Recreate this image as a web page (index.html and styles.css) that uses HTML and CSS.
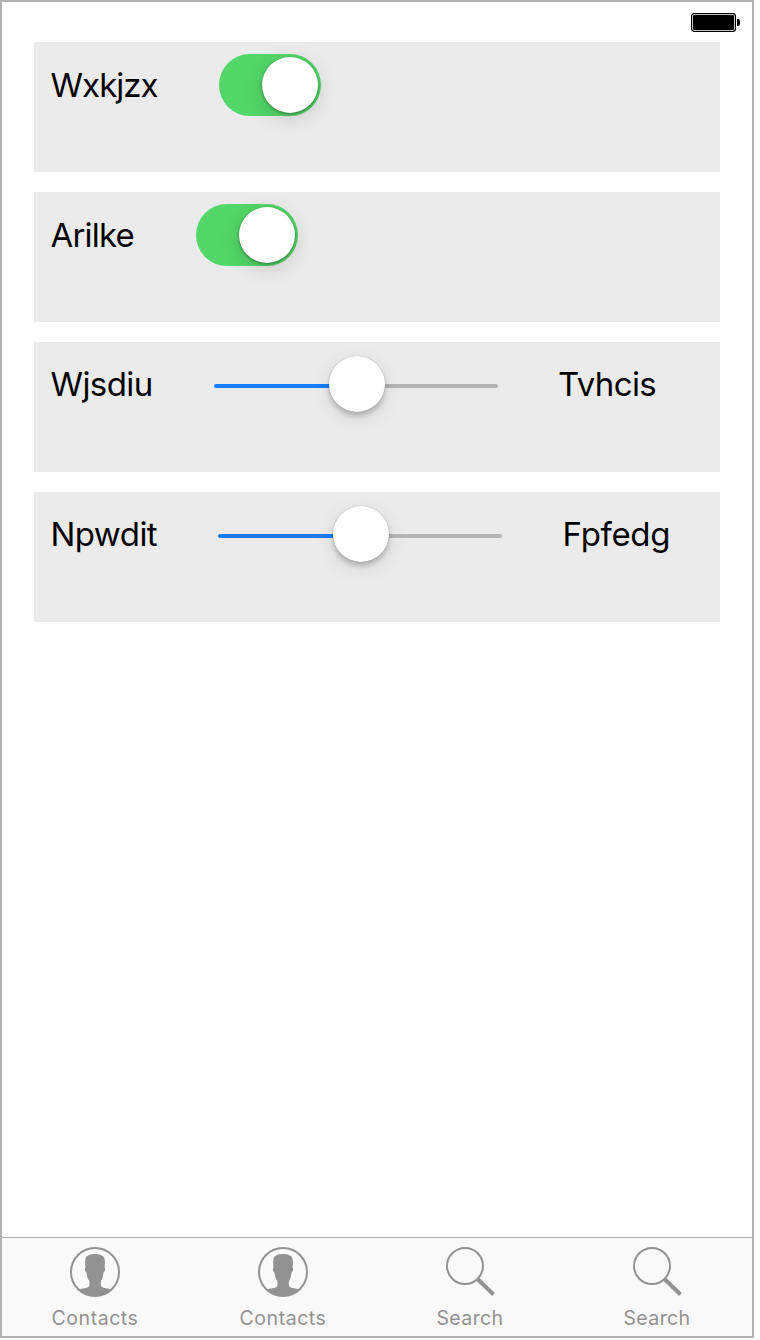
FILE: index.html
```html
<!DOCTYPE html>
<html lang="en">
<head>
<meta charset="utf-8">
<title>Settings</title>
<link rel="stylesheet" href="styles.css">
</head>
<body>
<div class="phone">
  <header class="status">
    <svg class="battery" viewBox="0 0 50 20" width="50" height="20">
      <rect x="0.6" y="0.6" width="43.8" height="17.8" rx="2.6" fill="none" stroke="#000" stroke-width="1.2"/>
      <rect x="2" y="2" width="41" height="15" rx="1" fill="#000"/>
      <path d="M46 6h.8a2.200 2.200 0 0 1 2.200 2.200v2.600a2.200 2.200 0 0 1-2.200 2.200H46z" fill="#000"/>
    </svg>
  </header>
  <main class="rows">
    <section class="row row-toggle row-a">
      <span class="label l1">Wxkjzx</span>
      <span class="toggle"><span class="knob"></span></span>
    </section>
    <section class="row row-toggle row-b">
      <span class="label l2">Arilke</span>
      <span class="toggle"><span class="knob"></span></span>
    </section>
    <section class="row row-slider row-c">
      <span class="label l3">Wjsdiu</span>
      <span class="slider"><span class="fill"></span><span class="thumb"></span><span class="rest"></span></span>
      <span class="label l4">Tvhcis</span>
    </section>
    <section class="row row-slider row-d">
      <span class="label l5">Npwdit</span>
      <span class="slider"><span class="fill"></span><span class="thumb"></span><span class="rest"></span></span>
      <span class="label l6">Fpfedg</span>
    </section>
  </main>
  <nav class="tabs">
    <a class="tab">
      <svg class="icon" viewBox="0 0 50 50" width="50" height="50"><circle cx="25" cy="25" r="24" fill="none" stroke="#929292" stroke-width="2"/><path d="M9 42.300L17 40.800Q19.500 40 19.500 38V34.500C17.700 32 16.800 29 16.500 25.500C15 25 14.500 21.500 15.500 20.800C15.200 17 14.800 13 16 10.500C18 7.500 22 7 25 7C29 7 33 8 34.300 11C35.300 13.500 34.900 17 34.600 20.800C35.500 21.500 35 25 33.500 25.500C33.200 29 32.300 32 30.800 34.500V38Q30.800 40 33.300 40.800L41 42.300C33 51.500 17 51.500 9 42.300z" fill="#929292"/></svg>
      <span class="caption contacts">Contacts</span>
    </a>
    <a class="tab">
      <svg class="icon" viewBox="0 0 50 50" width="50" height="50"><circle cx="25" cy="25" r="24" fill="none" stroke="#929292" stroke-width="2"/><path d="M9 42.300L17 40.800Q19.500 40 19.500 38V34.500C17.700 32 16.800 29 16.500 25.500C15 25 14.500 21.500 15.500 20.800C15.200 17 14.800 13 16 10.500C18 7.500 22 7 25 7C29 7 33 8 34.300 11C35.300 13.500 34.900 17 34.600 20.800C35.500 21.500 35 25 33.500 25.500C33.200 29 32.300 32 30.800 34.500V38Q30.800 40 33.300 40.800L41 42.300C33 51.500 17 51.500 9 42.300z" fill="#929292"/></svg>
      <span class="caption contacts">Contacts</span>
    </a>
    <a class="tab">
      <svg class="icon" viewBox="0 0 50 50" width="50" height="50"><circle cx="20" cy="19" r="18" fill="none" stroke="#929292" stroke-width="2"/><path d="M32.500 32L48.500 47.500" fill="none" stroke="#929292" stroke-width="4"/></svg>
      <span class="caption search">Search</span>
    </a>
    <a class="tab">
      <svg class="icon" viewBox="0 0 50 50" width="50" height="50"><circle cx="20" cy="19" r="18" fill="none" stroke="#929292" stroke-width="2"/><path d="M32.500 32L48.500 47.500" fill="none" stroke="#929292" stroke-width="4"/></svg>
      <span class="caption search">Search</span>
    </a>
  </nav>
</div>
</body>
</html>
```
FILE: styles.css
```css
* { box-sizing: border-box; }
body {
  margin: 0;
  background: #fff;
  font-family: Inter, "Liberation Sans", sans-serif;
}
.phone {
  display: flex;
  flex-direction: column;
  width: 754px;
  height: 1338px;
  border: 2px solid #b2b2b2;
  background: #fff;
}
.status {
  display: flex;
  justify-content: flex-end;
  height: 40px;
  padding: 11px 11px 0 0;
}
.battery { display: block; }
.rows {
  display: flex;
  flex: 1;
  flex-direction: column;
  gap: 20px;
  padding: 0 32px;
}
.row {
  display: grid;
  align-items: start;
  height: 130px;
  padding: 12px 0 0 16.500px;
  background: #ebebeb;
}
.row-a { grid-template-columns: 168.500px 102px; }
.row-b { grid-template-columns: 145.500px 102px; }
.row-c { grid-template-columns: 163.500px 344px 1fr; }
.row-d { grid-template-columns: 167.500px 344.500px 1fr; }
.label {
  height: 62px;
  font-size: 33px;
  line-height: 62px;
  color: #000;
  white-space: nowrap;
}
.l1 { letter-spacing: -0.95px; }
.l2 { letter-spacing: -0.8px; }
.l3 { letter-spacing: -0.6px; }
.l4 { letter-spacing: -0.6px; }
.l5 { letter-spacing: -0.55px; }
.l6 { letter-spacing: -0.35px; }
.row-slider .label { line-height: 60px; }
.toggle {
  display: flex;
  justify-content: flex-end;
  width: 102px;
  height: 62px;
  padding: 3px;
  border-radius: 31px;
  background: #53d769;
}
.knob, .thumb {
  width: 56px;
  height: 56px;
  border-radius: 50%;
  background: #fff;
}
.knob { box-shadow: 0 1px 3px rgba(0,0,0,.38), 0 5px 20px rgba(0,0,0,.17); }
.thumb {
  flex: none;
  margin-top: -4px;
  box-shadow: 0 0 1px rgba(0,0,0,.3), 0 4px 5px rgba(0,0,0,.2), 0 6px 20px rgba(0,0,0,.1);
  z-index: 1;
}
.slider {
  display: flex;
  align-items: center;
  width: 284px;
  height: 64px;
}
.fill, .rest { height: 4px; }
.fill {
  flex: 0 0 115px;
  border-radius: 2px 0 0 2px;
  background: #157efb;
}
.rest {
  flex: 1;
  border-radius: 0 2px 2px 0;
  background: #b5b5b5;
}
.tabs {
  display: grid;
  grid-template-columns: 186px 190px 184px 190px;
  height: 99px;
  border-top: 1px solid #b2b2b2;
  background: #f9f9f9;
}
.tab {
  display: flex;
  flex-direction: column;
  align-items: center;
  padding-top: 9px;
}
.icon { display: block; }
.caption {
  margin-top: 9px;
  font-size: 19.500px;
  line-height: 24px;
  color: #929292;
  white-space: nowrap;
}
.contacts { letter-spacing: 0.55px; }
.search { letter-spacing: 0.4px; }
```
